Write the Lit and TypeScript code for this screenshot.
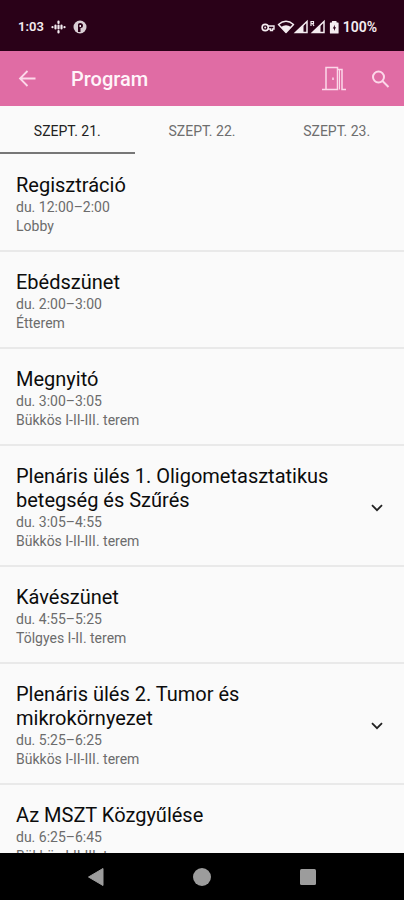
import { LitElement, html, css } from "lit";
import { customElement, property, state } from "lit/decorators.js";
import { classMap } from "lit/directives/class-map.js";

interface Session {
  title: string;
  time: string;
  place: string;
  expandable?: boolean;
}

const days = ["Szept. 21.", "Szept. 22.", "Szept. 23."];

const sessions: Session[] = [
  { title: "Regisztráció", time: "du. 12:00–2:00", place: "Lobby" },
  { title: "Ebédszünet", time: "du. 2:00–3:00", place: "Étterem" },
  { title: "Megnyitó", time: "du. 3:00–3:05", place: "Bükkös I-II-III. terem" },
  { title: "Plenáris ülés 1. Oligometasztatikus betegség és Szűrés", time: "du. 3:05–4:55", place: "Bükkös I-II-III. terem", expandable: true },
  { title: "Kávészünet", time: "du. 4:55–5:25", place: "Tölgyes I-II. terem" },
  { title: "Plenáris ülés 2. Tumor és mikrokörnyezet", time: "du. 5:25–6:25", place: "Bükkös I-II-III. terem", expandable: true },
  { title: "Az MSZT Közgyűlése", time: "du. 6:25–6:45", place: "Bükkös I-II-III. terem" },
];

@customElement("status-bar")
export class StatusBar extends LitElement {
  static styles = css`
    :host {
      display: flex;
      align-items: center;
      height: 51px;
      flex: none;
      padding: 2px 27px 0 18px;
      box-sizing: border-box;
      background: #2a0118;
      color: #f4ecf0;
      font-size: 14px;
      font-weight: 600;
    }
    .group { display: flex; align-items: center; }
    .left { gap: 7px; font-size: 13px; }
    .right { margin-left: auto; }
    .level { margin-left: 2px; }
    svg { display: block; }
  `;
  render() {
    return html`
      <div class="group left">
        <span>1:03</span>
        <svg width="15" height="14" viewBox="0 0 15 14" fill="none" stroke="#f4ecf0" stroke-width="2.200" stroke-linecap="round">
          <path d="M1.500 7v.2M4.500 5.500v3M7.500 1.500v1.500M7.500 5.500v3M7.500 11v1.500M10.500 5.500v3M13.500 7v.2" />
        </svg>
        <svg width="14" height="14" viewBox="0 0 14 14">
          <circle cx="7" cy="7" r="6.500" fill="#d9ced4" />
          <path d="M5 12V4.500Q5 3 7 3Q10 3 10 5.500Q10 8 7.500 8V12" fill="#2a0118" />
          <path d="M6.500 5h1.500v2h-1.500z" fill="#f4ecf0" />
        </svg>
      </div>
      <div class="group right">
        <svg width="80" height="16" viewBox="0 0 80 16" fill="none" stroke="#f4ecf0">
          <circle cx="4.200" cy="8.500" r="3.100" stroke-width="1.600" />
          <circle cx="4.200" cy="8.500" r="1" fill="#f4ecf0" stroke="none" />
          <path d="M7 7h6v3h-1.500v1.500h-2V10H7" stroke-width="1.400" />
          <path d="M17.500 5.500Q25 -1 32.500 5.500L25 13.500z" stroke-width="1.500" stroke-linejoin="round" />
          <path d="M20 8Q25 4.500 30 8L25 13.500z" fill="#f4ecf0" stroke="none" />
          <path d="M46 2.500V13.500H34.500z" stroke-width="1.500" />
          <path d="M42.500 6V13.500H34.500z" fill="#f4ecf0" stroke="none" />
          <path d="M63 2.500V13.500H51.500z" stroke-width="1.500" />
          <path d="M59.500 6V13.500H51.500z" fill="#f4ecf0" stroke="none" />
          <path d="M50 7V2.500h2.500v2h-2.500M51.500 4.500l1.500 2.500" stroke-width="1.200" />
          <path d="M69.500 4h2v-1.500h3.500v1.500h2V14h-7.500z" fill="#f4ecf0" stroke-width="1.200" stroke-linejoin="round" />
          <path d="M73.800 5.800l-2 3.700h1.200v2.500l2-3.700h-1.200z" fill="#2a0118" stroke="none" />
        </svg>
        <span class="level">100%</span>
      </div>
    `;
  }
}

@customElement("session-item")
export class SessionItem extends LitElement {
  @property({ attribute: false }) session!: Session;
  static styles = css`
    :host {
      display: flex;
      align-items: center;
      padding: 18px 16px 14px;
      border-bottom: 2px solid #e9e9e9;
    }
    .text { flex: 1; min-width: 0; padding-right: 8px; }
    h2 { margin: 0 0 1px; font-size: 20px; line-height: 24px; font-weight: 400; color: #0c0c0c; }
    p { margin: 0; font-size: 14px; line-height: 19px; color: #6c6c6c; }
    button { border: 0; padding: 0; background: none; width: 22px; height: 24px; color: #222; flex: none; }
    svg { display: block; margin: auto; }
  `;
  render() {
    const s = this.session;
    return html`
      <div class="text">
        <h2>${s.title}</h2>
        <p>${s.time}</p>
        <p>${s.place}</p>
      </div>
      ${s.expandable
        ? html`<button aria-label="Részletek">
            <svg width="12" height="8" viewBox="0 0 12 8" fill="none" stroke="currentColor" stroke-width="1.800">
              <path d="M1 1.200l5 5 5-5" />
            </svg>
          </button>`
        : ""}
    `;
  }
}

@customElement("app-root")
export class AppRoot extends LitElement {
  @state() private day = 0;
  static styles = css`
    :host {
      display: flex;
      flex-direction: column;
      height: 100vh;
      background: #fafafa;
      font-family: Roboto, "Liberation Sans", sans-serif;
    }
    button { border: 0; padding: 0; background: none; font-family: inherit; color: inherit; }
    svg { display: block; }
    .bar {
      display: flex;
      align-items: center;
      flex: none;
      height: 55px;
      padding: 1px 14px 0 18px;
      box-sizing: border-box;
      background: #e06ca4;
      color: #fcd8e9;
    }
    h1 { margin: 0 auto 0 34px; font-size: 20px; line-height: 24px; font-weight: 500; color: #fff5fa; }
    .bar .search { margin-left: 25px; }
    .tabs { display: grid; grid-template-columns: repeat(3, 1fr); flex: none; height: 48px; }
    .tab {
      padding-top: 4px;
      border-bottom: 2px solid transparent;
      font-size: 14px;
      color: #6e6e6e;
      text-transform: uppercase;
    }
    .active { color: #222; border-color: #777; }
    main { flex: 1; min-height: 0; padding-top: 1px; overflow-y: auto; scrollbar-width: none; }
    nav {
      display: grid;
      grid-template-columns: repeat(3, 106px);
      justify-content: center;
      flex: none;
      height: 47px;
      background: #000;
      color: #9c9c9c;
    }
    nav svg { margin: auto; }
  `;
  render() {
    return html`
      <status-bar></status-bar>
      <header class="bar">
        <button aria-label="Vissza">
          <svg width="19" height="18" viewBox="0 0 19 18" fill="none" stroke="currentColor" stroke-width="1.800">
            <path d="M17.500 8.500H2.500M9.500 1L2 8.500l7.500 7.500" />
          </svg>
        </button>
        <h1>Program</h1>
        <button aria-label="Kilépés">
          <svg width="24" height="26" viewBox="0 0 24 26" fill="none" stroke="currentColor" stroke-width="1.500">
            <path d="M0 23.500h4V1.500h11.500V23.500h-11.500M15.500 3.500h4.500V23.500h4M11 11.500v2.500" />
            <path d="M17.500 3.500V23.500" stroke-width="1" />
          </svg>
        </button>
        <button class="search" aria-label="Keresés">
          <svg width="19" height="19" viewBox="0 0 19 19" fill="none" stroke="currentColor" stroke-width="2">
            <circle cx="7.500" cy="7" r="5.500" />
            <path d="M11.500 11l6 6" />
          </svg>
        </button>
      </header>
      <div class="tabs" role="tablist">
        ${days.map(
          (d, i) => html`<button
            role="tab"
            aria-selected=${i === this.day ? "true" : "false"}
            class=${classMap({ tab: true, active: i === this.day })}
            @click=${() => (this.day = i)}
          >${d}</button>`
        )}
      </div>
      <main>${sessions.map((s) => html`<session-item .session=${s}></session-item>`)}</main>
      <nav>
        <button aria-label="Vissza">
          <svg width="18" height="20" viewBox="0 0 18 20"><path d="M1.500 10L16 1.500v17z" fill="currentColor" stroke="currentColor" stroke-linejoin="round" /></svg>
        </button>
        <button aria-label="Kezdőképernyő">
          <svg width="18" height="18" viewBox="0 0 18 18"><circle cx="9" cy="9" r="9" fill="currentColor" /></svg>
        </button>
        <button aria-label="Áttekintés">
          <svg width="16" height="16" viewBox="0 0 16 16"><rect width="16" height="16" rx="1.500" fill="currentColor" /></svg>
        </button>
      </nav>
    `;
  }
}
